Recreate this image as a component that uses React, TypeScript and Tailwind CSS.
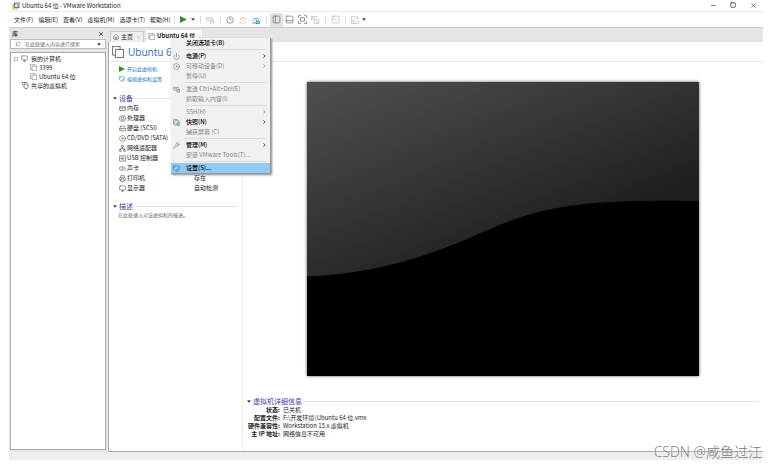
import React from 'react';
import {
  Disc,
  HardDrive,
  Home,
  Minus,
  Monitor,
  Network,
  PanelBottom,
  PanelLeft,
  Power,
  Printer,
  Search,
  Square,
  SquareTerminal,
  Volume2,
  Wrench,
  X,
} from 'lucide-react';

type IconType = React.ComponentType<{ className?: string }>;

const menus = ['文件(F)', '编辑(E)', '查看(V)', '虚拟机(M)', '选项卡(T)', '帮助(H)'];

const Caret = () => (
  <svg viewBox="0 0 6 4" className="w-1 h-[3px] shrink-0 fill-[#444]">
    <path d="M0 0h6L3 4z" />
  </svg>
);

const Play = ({ className = '' }: { className?: string }) => (
  <svg viewBox="0 0 8 8" className={`shrink-0 fill-[#35912b] ${className}`}>
    <path d="M0 0l8 4-8 4z" />
  </svg>
);

// two overlapping pages, used for every virtual machine
const VmIcon = ({ className = '' }: { className?: string }) => (
  <svg viewBox="0 0 14 14" fill="none" stroke="#555" className={`shrink-0 ${className}`}>
    <path d="M3.5 10.5h-3v-10h9v3" />
    <path d="M4 4h9.5v9.5H4z" fill="#fff" />
  </svg>
);

const SharedIcon = () => (
  <svg viewBox="0 0 14 14" fill="none" stroke="#555" strokeWidth="1.5" className="w-[7px] h-[7px] shrink-0">
    <path d="M1 5V1h9M4 4h8v6l-2 3H6l-2-3z" />
  </svg>
);

const Logo = () => (
  <svg viewBox="0 0 16 16" className="w-2 h-2 shrink-0" fill="none" strokeWidth="2.2">
    <path d="M2 5h9v9H2z" stroke="#e3b04a" />
    <path d="M5 2h9v9H5z" stroke="#3d83a8" />
    <path d="M5 6v5h5" stroke="#3e8f63" />
  </svg>
);

const Line = ({ className = '', children }: { className?: string; children: React.ReactNode }) => (
  <svg viewBox="0 0 16 16" fill="none" stroke="currentColor" strokeWidth="1.4" className={`shrink-0 ${className}`}>
    {children}
  </svg>
);

const Memory: IconType = p => (
  <Line {...p}><path d="M1 4h14v8H1zM4 4v5M8 4v5M12 4v5M3 12v2M7 12v2M11 12v2" /></Line>
);
const Chip: IconType = p => (
  <Line {...p}><path d="M5 2h8l2 3v6l-3 3H4l-3-3V5zM5 5h6v6H5z" /></Line>
);
const UsbBox: IconType = p => (
  <Line {...p}><path d="M1 2h14v12H1zM3 8h9M5 8l2-3h3M6 8l2 3h2" /></Line>
);
const SettingsPage: IconType = p => (
  <Line {...p}><path d="M7 13H4L1 10V2h13v6M1 5h4M8 14l1-4 4-1 2 2-4 4z" /></Line>
);
const SendKeys: IconType = p => (
  <Line {...p}><path d="M9 10H3L1 8V3h11v5M3 6h6M9 8h6v6H9zM11 11h4" /></Line>
);
const Snapshot: IconType = p => (
  <Line {...p}>
    <path d="M3 11H1V1h9v2M4 4h10v4M4 4v10h3" stroke="#777" />
    <circle cx="11.5" cy="11.5" r="3.5" fill="#8fd3ea" />
  </Line>
);
const ClockPlain: IconType = p => (
  <Line {...p}><circle cx="8" cy="8" r="6.5" /><path d="M8 4v4h3M3 14l-1 1M13 14l1 1" /></Line>
);
const ClockBack: IconType = p => (
  <Line {...p}><path d="M2 9a6 6 0 1 1 12 0M8 5v4h2M1 14h6M9 14h6M3 11l-2 3" /></Line>
);
const ClockManage: IconType = p => (
  <Line {...p}><path d="M2 10a6 6 0 1 1 12 0M8 5v4h2" /><path d="M1 14h6M8 11h7v4H8z" strokeWidth="2" /></Line>
);
const FullScreen: IconType = p => (
  <Line {...p}><path d="M1 5V1h4M11 1h4v4M15 11v4h-4M5 15H1v-4M4.500 5h7v6h-7z" /></Line>
);
const Unity: IconType = p => (
  <Line {...p}><path d="M1 9V1h10v3M1 5h5M6 7h9v8H6zM3 2l11 12" /></Line>
);
const Stretch: IconType = p => (
  <Line {...p}><path d="M9 1H1v14h14V8M4 12l10-10M10 2h4v4M4 8v4h4" /></Line>
);

const devices: { icon: IconType; name: string; value?: string }[] = [
  { icon: Memory, name: '内存' },
  { icon: Chip, name: '处理器' },
  { icon: HardDrive, name: '硬盘 (SCSI)' },
  { icon: Disc, name: 'CD/DVD (SATA)' },
  { icon: Network, name: '网络适配器' },
  { icon: UsbBox, name: 'USB 控制器' },
  { icon: Volume2, name: '声卡' },
  { icon: Printer, name: '打印机', value: '存在' },
  { icon: Monitor, name: '显示器', value: '自动检测' },
];

const details = [
  ['状态:', '已关机'],
  ['配置文件:', 'F:\\开发环境\\Ubuntu 64 位.vmx'],
  ['硬件兼容性:', 'Workstation 15.x 虚拟机'],
  ['主 IP 地址:', '网络信息不可用'],
];

type MenuEntry = {
  label: string;
  icon?: IconType;
  blue?: boolean;
  disabled?: boolean;
  sub?: boolean;
  active?: boolean;
};

// each inner array is a group, groups are divided by a line
const contextMenu: MenuEntry[][] = [
  [{ label: '关闭选项卡(B)' }],
  [
    { label: '电源(P)', icon: Power, sub: true },
    { label: '可移动设备(D)', icon: Disc, disabled: true, sub: true },
    { label: '暂停(U)', disabled: true },
  ],
  [
    { label: '发送 Ctrl+Alt+Del(E)', icon: SendKeys, disabled: true },
    { label: '抓取输入内容(I)', disabled: true },
  ],
  [
    { label: 'SSH(H)', disabled: true, sub: true },
    { label: '快照(N)', icon: Snapshot, blue: true, sub: true },
    { label: '捕获屏幕 (C)', disabled: true },
  ],
  [
    { label: '管理(M)', icon: Wrench, sub: true },
    { label: '安装 VMware Tools(T)...', disabled: true },
  ],
  [{ label: '设置(S)...', icon: SettingsPage, blue: true, active: true }],
];

const Divider = () => <span className="w-px h-2 mx-[3px] bg-[#ddd]" />;

const ToolButton = ({ label, active, children }: { label: string; active?: boolean; children: React.ReactNode }) => (
  <button
    aria-label={label}
    className={`w-[13px] h-3.5 flex items-center justify-center shrink-0 ${active ? 'bg-[#e2e2e2]' : ''}`}
  >
    {children}
  </button>
);

const TitleBar = () => (
  <header className="h-3 flex items-center border-b border-[#ededed]">
    <div className="flex items-center gap-0.5 pl-[3px]">
      <Logo />
      <h1>Ubuntu 64 位 - VMware Workstation</h1>
    </div>
    <div className="ml-auto flex text-[#333]">
      <button aria-label="最小化" className="w-5 flex justify-center"><Minus size={7} /></button>
      <button aria-label="最大化" className="w-5 flex justify-center"><Square size={6} strokeWidth={3} /></button>
      <button aria-label="关闭" className="w-5 flex justify-center"><X size={7} /></button>
    </div>
  </header>
);

const Toolbar = () => (
  <div className="h-4 flex items-center pl-[5px] border-b border-[#ccc]">
    <nav className="flex items-center gap-[5px]">
      {menus.map(m => <button key={m}>{m}</button>)}
    </nav>
    <div className="flex items-center text-[#777]">
      <Divider />
      <button aria-label="开机" className="flex items-center gap-1 px-0.5">
        <Play className="w-[7px] h-[7px]" />
        <Caret />
      </button>
      <Divider />
      <ToolButton label="发送"><SendKeys className="w-2 h-2 text-[#bbb]" /></ToolButton>
      <Divider />
      <ToolButton label="拍摄快照"><ClockPlain className="w-2 h-2" /></ToolButton>
      <ToolButton label="恢复快照"><ClockBack className="w-2 h-2 text-[#e3b39a]" /></ToolButton>
      <ToolButton label="管理快照"><ClockManage className="w-2 h-2 text-[#2c95c8]" /></ToolButton>
      <Divider />
      <ToolButton label="显示库" active><PanelLeft size={9} /></ToolButton>
      <ToolButton label="缩略图栏"><PanelBottom size={9} /></ToolButton>
      <ToolButton label="全屏"><FullScreen className="w-[9px] h-[9px]" /></ToolButton>
      <ToolButton label="Unity"><Unity className="w-2 h-2 text-[#bbb]" /></ToolButton>
      <Divider />
      <ToolButton label="控制台"><SquareTerminal size={9} className="text-[#bbb]" /></ToolButton>
      <Divider />
      <ToolButton label="拉伸"><Stretch className="w-2 h-2 text-[#bbb]" /></ToolButton>
      <Caret />
    </div>
  </div>
);

const Library = () => (
  <aside className="w-[98px] shrink-0 flex flex-col px-px pb-0.5">
    <div className="h-[11px] flex items-center justify-between px-0.5">
      <h2 className="font-medium">库</h2>
      <button aria-label="关闭库"><X size={6} strokeWidth={3} /></button>
    </div>
    <div className="h-2.5 flex items-center gap-1 px-1 bg-white border border-[#bbb]">
      <Search size={6} className="shrink-0 text-[#777] -scale-x-100" />
      <input
        aria-label="搜索"
        placeholder="在此处键入内容进行搜索"
        className="flex-1 min-w-0 text-[5px] leading-[8px] outline-none placeholder:text-[#666]"
      />
      <Caret />
    </div>
    <ul className="flex-1 mt-[3px] pt-px px-[3px] bg-white border border-[#aaa] leading-[9px]">
      <li>
        <div className="flex items-center gap-[3px]">
          <span className="w-1 h-1 border border-[#bbb]" />
          <Monitor size={7} className="text-[#555]" />
          <span>我的计算机</span>
        </div>
        <ul className="pl-4">
          <li className="flex items-center gap-0.5"><VmIcon className="w-[7px] h-[7px]" />3399</li>
          <li className="flex items-center gap-0.5"><VmIcon className="w-[7px] h-[7px]" />Ubuntu 64 位</li>
        </ul>
      </li>
      <li className="flex items-center gap-0.5 pl-2"><SharedIcon />共享的虚拟机</li>
    </ul>
  </aside>
);

const Tabs = () => (
  <div className="h-3 flex items-end gap-0.5 pl-0.5">
    <button className="h-[11px] w-[34px] flex items-center gap-0.5 px-0.5 bg-[#eee] border border-b-0 border-[#ccc] whitespace-nowrap">
      <Home size={6} className="shrink-0 text-[#555]" />
      主页
      <X size={5} className="ml-auto shrink-0 text-[#bbb]" />
    </button>
    <button className="h-3 w-14 flex items-center gap-0.5 px-0.5 bg-white font-bold whitespace-nowrap">
      <VmIcon className="w-[7px] h-[7px]" />
      Ubuntu 64 位
      <X size={5} className="ml-auto shrink-0 text-[#999]" />
    </button>
  </div>
);

const SectionTitle = ({ children }: { children: React.ReactNode }) => (
  <h3 className="flex items-center gap-0.5 text-[7px] leading-[10px] text-[#4540a5]">
    <Caret />
    <span>{children}</span>
    <span className="flex-1 h-px bg-[#e2e2e2]" />
  </h3>
);

const Summary = () => (
  <section className="w-[134px] shrink-0 border-r border-[#eee] pr-1 pl-1 pt-0.5">
    <div className="flex flex-col pl-1.5 text-[5px] leading-[10px] text-[#1f6fc0]">
      <a href="#power" className="flex items-center gap-0.5"><Play className="w-1.5 h-1.5" />开启此虚拟机</a>
      <a href="#edit" className="flex items-center gap-0.5"><SettingsPage className="w-1.5 h-1.5" />编辑虚拟机设置</a>
    </div>
    <div className="pt-[9px]">
      <SectionTitle>设备</SectionTitle>
      <table className="w-full leading-[10px]">
        <tbody>
          {devices.map(({ icon: Icon, name, value }) => (
            <tr key={name}>
              <th scope="row" className="w-[81px] p-0 pl-1.5 text-left font-normal">
                <span className="flex items-center gap-px whitespace-nowrap">
                  <Icon className="w-[7px] h-[7px] text-[#555]" />
                  {name}
                </span>
              </th>
              <td className="p-0">{value}</td>
            </tr>
          ))}
        </tbody>
      </table>
    </div>
    <div className="pt-2">
      <SectionTitle>描述</SectionTitle>
      <p className="pl-[5px] text-[5px] leading-[8px] text-[#666]">在此处键入对该虚拟机的描述。</p>
    </div>
  </section>
);

const Preview = () => (
  <div className="px-16 pt-5">
    <svg viewBox="0 0 393 295" role="img" aria-label="虚拟机屏幕" className="w-full shadow-[0_0_3px_#555]">
      <defs>
        <linearGradient id="shade" gradientUnits="userSpaceOnUse" x1="20" y1="0" x2="110" y2="220">
          <stop offset="0" stopColor="#4e4e4e" />
          <stop offset="0.5" stopColor="#373737" />
          <stop offset="1" stopColor="#1e1e1e" />
        </linearGradient>
      </defs>
      <path d="M0 0h393v295H0z" fill="url(#shade)" />
      <path d="M0 195C70 192 125 174 180 149S280 117 393 119.500V295H0z" fill="#000" />
    </svg>
  </div>
);

const Details = () => (
  <div className="pl-1 pr-1 pb-[13px] mt-auto">
    <SectionTitle>虚拟机详细信息</SectionTitle>
    <dl className="grid grid-cols-[33px_1fr] gap-x-[3px] leading-[8px]">
      {details.map(([label, value]) => (
        <React.Fragment key={label}>
          <dt className="flex justify-end font-bold whitespace-nowrap">{label}</dt>
          <dd>{value}</dd>
        </React.Fragment>
      ))}
    </dl>
  </div>
);

const ContextMenu = () => (
  <div role="menu" className="absolute left-[171px] top-[38px] w-[100px] bg-[#f1f1f1] border-r border-b border-[#999] shadow-[1px_1px_2px_#888]">
    {contextMenu.map((group, i) => (
      <div key={i} role="group">
        {i > 0 && <div className="h-px my-px ml-3.5 mr-1 bg-[#dcdcdc]" />}
        {group.map(({ label, icon: Icon, blue, disabled, sub, active }) => (
          <button
            key={label}
            role="menuitem"
            disabled={disabled}
            className={`h-2.5 w-full flex items-center pl-0.5 pr-1 text-left whitespace-nowrap ${
              active ? 'bg-[#91c9f7]' : ''
            } ${disabled ? 'text-[#858585]' : 'text-black font-medium'}`}
          >
            <span className="w-[13px] shrink-0">
              {Icon && <Icon className={`w-[7px] h-[7px] ${blue ? 'text-[#2582b0]' : 'text-[#777]'}`} />}
            </span>
            {label}
            {sub && (
              <svg viewBox="0 0 4 6" className="w-[3px] h-1 ml-auto" fill="none" stroke="currentColor">
                <path d="M.5.5L3 3 .5 5.500" />
              </svg>
            )}
          </button>
        ))}
      </div>
    ))}
  </div>
);

const App = () => (
  <div
    lang="zh-CN"
    className="relative min-h-screen flex flex-col bg-white pl-[9px] pr-[5px] pb-1.5 text-[6px] leading-[8px] text-[#222] font-['Noto_Sans_CJK_SC','Open_Sans',sans-serif]"
  >
    <TitleBar />
    <Toolbar />
    <div className="flex-1 flex bg-[#e5e5e6]">
      <Library />
      <main className="flex-1 min-w-0 flex flex-col pt-0.5 ml-px">
        <Tabs />
        <div className="flex-1 flex flex-col bg-white border-l border-b border-[#aaa]">
          <div className="h-5 flex items-center gap-1 pl-[3px] border-b border-[#e6e6e6]">
            <VmIcon className="w-3 h-3" />
            <h2 className="text-[10px] leading-[14px] text-[#2a6fb8] font-['Open_Sans','Noto_Sans_CJK_SC',sans-serif]">
              Ubuntu 64 位
            </h2>
          </div>
          <div className="flex-1 flex">
            <Summary />
            <section className="flex-1 min-w-0 flex flex-col">
              <Preview />
              <Details />
            </section>
          </div>
        </div>
      </main>
    </div>
    <footer className="h-2 bg-[#eee]" />
    <ContextMenu />
    <p className="absolute right-1.5 bottom-1 text-[14px] leading-5 font-light text-[#777] [text-shadow:0_0_1px_#fff] font-['Open_Sans','Noto_Sans_CJK_SC',sans-serif]">
      CSDN @咸鱼过江
    </p>
  </div>
);

export default App;
